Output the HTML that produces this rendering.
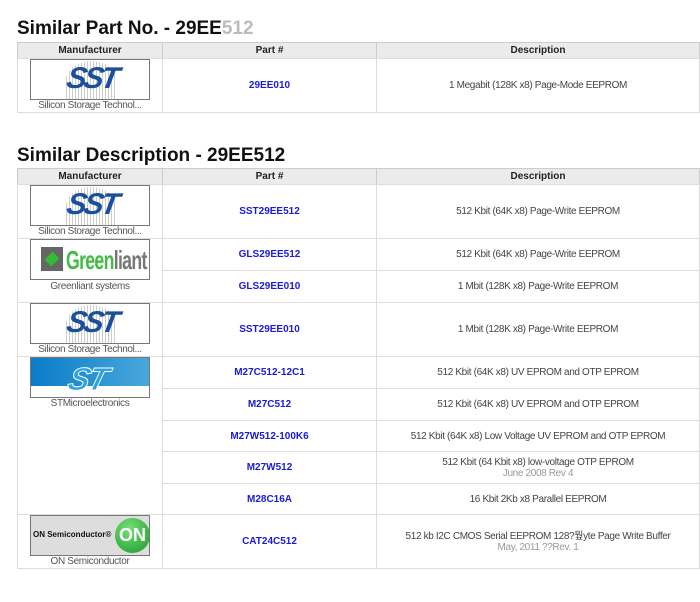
<!DOCTYPE html>
<html><head><meta charset="utf-8"><style>
*{margin:0;padding:0;box-sizing:border-box}
body{width:700px;height:602px;background:#fff;font-family:"Liberation Sans","Noto Sans CJK KR",sans-serif;position:relative;overflow:hidden;color:#444}
.t{position:absolute;left:17px;font-size:19px;font-weight:bold;color:#111}
.c{position:absolute;border:1px solid #ddd;display:flex;align-items:center;justify-content:center;flex-direction:column;font-size:10px;letter-spacing:-0.35px;text-align:center;line-height:11px}
.h{background:#ebebeb;font-weight:bold;color:#222;border-color:#ccc;letter-spacing:0}
.p{color:#1a1ad8;font-weight:bold;letter-spacing:0}
.s{color:#999}
.logo{position:absolute;left:30px;width:120px;height:41px;border:1px solid #777;background:#fff;overflow:hidden}
.mn{position:absolute;left:17px;width:146px;font-size:10px;letter-spacing:-0.35px;text-align:center;color:#555}
.sst{font:italic bold 30px "Liberation Sans",sans-serif;color:#1a4f9c;position:absolute;left:36px;top:2px;letter-spacing:-3px;transform:skewX(-10deg)}
.strp{position:absolute;left:35px;top:1px;width:50px;height:38px;background:repeating-linear-gradient(90deg,#ccc 0 1px,#fff 1px 3px);border-radius:50% 50% 0 0}
</style></head><body>
<div class="t" style="top:18px">Similar Part No. - 29EE<span style="color:#bbb">512</span></div>
<div class="c h" style="left:17px;top:42px;width:146px;height:17px">Manufacturer</div>
<div class="c h" style="left:162px;top:42px;width:215px;height:17px">Part #</div>
<div class="c h" style="left:376px;top:42px;width:324px;height:17px">Description</div>
<div class="c" style="left:17px;top:58px;width:146px;height:55px"></div>
<div class="c p" style="left:162px;top:58px;width:215px;height:55px">29EE010</div>
<div class="c" style="left:376px;top:58px;width:324px;height:55px">1 Megabit (128K x8) Page-Mode EEPROM</div>
<div class="logo" style="top:59px"><div class="strp"></div><div class="sst">SST</div></div>
<div class="mn" style="top:100px">Silicon Storage Technol...</div>

<div class="t" style="top:145px">Similar Description - 29EE512</div>
<div class="c h" style="left:17px;top:168px;width:146px;height:17px">Manufacturer</div>
<div class="c h" style="left:162px;top:168px;width:215px;height:17px">Part #</div>
<div class="c h" style="left:376px;top:168px;width:324px;height:17px">Description</div>

<div class="c" style="left:17px;top:184px;width:146px;height:55px"></div>
<div class="c" style="left:17px;top:238px;width:146px;height:65px"></div>
<div class="c" style="left:17px;top:302px;width:146px;height:55px"></div>
<div class="c" style="left:17px;top:356px;width:146px;height:159px"></div>
<div class="c" style="left:17px;top:514px;width:146px;height:55px"></div>

<div class="c p" style="left:162px;top:184px;width:215px;height:55px">SST29EE512</div>
<div class="c" style="left:376px;top:184px;width:324px;height:55px">512 Kbit (64K x8) Page-Write EEPROM</div>
<div class="c p" style="left:162px;top:238px;width:215px;height:33px">GLS29EE512</div>
<div class="c" style="left:376px;top:238px;width:324px;height:33px">512 Kbit (64K x8) Page-Write EEPROM</div>
<div class="c p" style="left:162px;top:270px;width:215px;height:33px">GLS29EE010</div>
<div class="c" style="left:376px;top:270px;width:324px;height:33px">1 Mbit (128K x8) Page-Write EEPROM</div>
<div class="c p" style="left:162px;top:302px;width:215px;height:55px">SST29EE010</div>
<div class="c" style="left:376px;top:302px;width:324px;height:55px">1 Mbit (128K x8) Page-Write EEPROM</div>
<div class="c p" style="left:162px;top:356px;width:215px;height:33px">M27C512-12C1</div>
<div class="c" style="left:376px;top:356px;width:324px;height:33px">512 Kbit (64K x8) UV EPROM and OTP EPROM</div>
<div class="c p" style="left:162px;top:388px;width:215px;height:33px">M27C512</div>
<div class="c" style="left:376px;top:388px;width:324px;height:33px">512 Kbit (64K x8) UV EPROM and OTP EPROM</div>
<div class="c p" style="left:162px;top:420px;width:215px;height:32px">M27W512-100K6</div>
<div class="c" style="left:376px;top:420px;width:324px;height:32px">512 Kbit (64K x8) Low Voltage UV EPROM and OTP EPROM</div>
<div class="c p" style="left:162px;top:451px;width:215px;height:33px">M27W512</div>
<div class="c" style="left:376px;top:451px;width:324px;height:33px">512 Kbit (64 Kbit x8) low-voltage OTP EPROM<span class="s">June 2008 Rev 4</span></div>
<div class="c p" style="left:162px;top:483px;width:215px;height:32px">M28C16A</div>
<div class="c" style="left:376px;top:483px;width:324px;height:32px">16 Kbit 2Kb x8 Parallel EEPROM</div>
<div class="c p" style="left:162px;top:514px;width:215px;height:55px">CAT24C512</div>
<div class="c" style="left:376px;top:514px;width:324px;height:55px">512 kb I2C CMOS Serial EEPROM 128?뭪yte Page Write Buffer<span class="s">May, 2011 ??Rev. 1</span></div>

<div class="logo" style="top:185px"><div class="strp"></div><div class="sst">SST</div></div>
<div class="mn" style="top:226px">Silicon Storage Technol...</div>
<div class="logo" style="top:239px">
 <div style="position:absolute;left:10px;top:7px;width:22px;height:24px;background:#666"></div>
 <div style="position:absolute;left:15px;top:12px;width:12px;height:14px;background:#3b3;transform:rotate(45deg) scale(.8)"></div>
 <div style="position:absolute;left:35px;top:5px;font:bold 26px 'Liberation Sans',sans-serif;letter-spacing:-1px;transform:scaleX(.68);transform-origin:left;white-space:nowrap"><span style="color:#4b4">Green</span><span style="color:#777">liant</span></div>
</div>
<div class="mn" style="top:281px">Greenliant systems</div>
<div class="logo" style="top:303px"><div class="strp"></div><div class="sst">SST</div></div>
<div class="mn" style="top:344px">Silicon Storage Technol...</div>
<div class="logo" style="top:357px">
 <div style="position:absolute;left:0;top:0;width:120px;height:28px;background:linear-gradient(90deg,#0a7cc8,#4aa8dc)"></div>
 <div style="position:absolute;left:38px;top:3px;font:italic bold 32px 'Liberation Sans',sans-serif;color:#2aa2e0;transform:skewX(-15deg);letter-spacing:-2px;-webkit-text-stroke:1px #fff">ST</div>
</div>
<div class="mn" style="top:398px">STMicroelectronics</div>
<div class="logo" style="top:515px;background:#ddd">
 <div style="position:absolute;left:2px;top:14px;font:bold 8px 'Liberation Sans',sans-serif;color:#111;white-space:nowrap">ON Semiconductor®</div>
 <div style="position:absolute;left:84px;top:2px;width:35px;height:35px;border-radius:50%;background:radial-gradient(circle at 40% 30%,#7d7,#1a9a2a);color:#fff;font:bold 18px 'Liberation Sans',sans-serif;display:flex;align-items:center;justify-content:center">ON</div>
</div>
<div class="mn" style="top:556px">ON Semiconductor</div>
</body></html>
